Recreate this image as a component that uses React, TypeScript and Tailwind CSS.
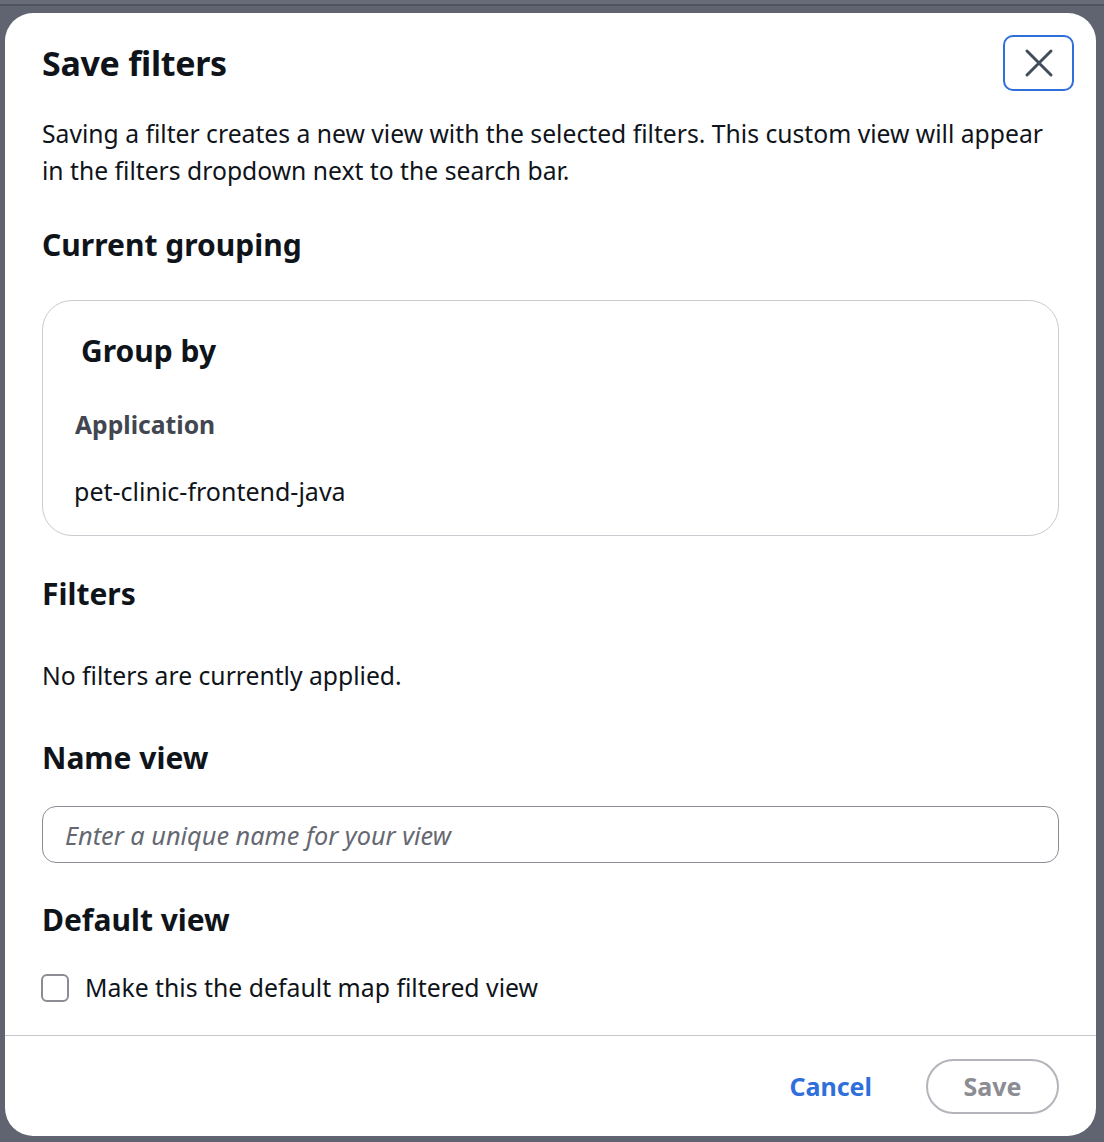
import React, { useState } from 'react';

const font = { fontFamily: '"Noto Sans", "Open Sans", Arial, sans-serif' };

function CloseIcon() {
  return (
    <svg width="30" height="30" viewBox="0 0 30 30" fill="none">
      <path d="M3 3 L27 27 M27 3 L3 27" stroke="#414d5c" strokeWidth="3" strokeLinecap="round" />
    </svg>
  );
}

export default function App() {
  const [name, setName] = useState('');
  const [isDefault, setIsDefault] = useState(false);

  return (
    <div className="w-[1104px] h-[1142px] bg-[#5f6470] overflow-hidden" style={font}>
      <div className="h-[6px] bg-[#676c78] border-b-2 border-[#4f5460]" />
      <div className="pl-[5px] pt-[7px]">
        <div className="w-[1091px] h-[1123px] bg-white rounded-[28px] flex flex-col text-[#0f141a]">
          {/* Header */}
          <div className="flex items-center justify-between pl-[37px] pr-[22px] pt-[22px]">
            <h1 className="text-[34px] leading-[56px] font-bold tracking-[-0.3px]">Save filters</h1>
            <button className="w-[71px] h-[56px] rounded-[10px] border-2 border-[#2f6fdb] flex items-center justify-center">
              <CloseIcon />
            </button>
          </div>

          <div className="px-[37px] flex flex-col">
            <p className="mt-[24px] text-[24.7px] leading-[37px]">
              Saving a filter creates a new view with the selected filters. This custom view will appear in the filters dropdown next to the search bar.
            </p>

            <h2 className="mt-[36px] text-[30px] leading-[40px] font-bold">Current grouping</h2>

            <div className="mt-[35px] border border-[#cacad1] rounded-[30px] pt-[30px] pb-[25px] px-[31px]">
              <div className="pl-[7px] text-[30px] leading-[40px] font-bold">Group by</div>
              <div className="mt-[35px] pl-[1px] text-[24.7px] leading-[37px] font-bold text-[#424650]">Application</div>
              <div className="mt-[30px] text-[25px] leading-[37px]">pet-clinic-frontend-java</div>
            </div>

            <h2 className="mt-[38px] text-[30px] leading-[40px] font-bold">Filters</h2>
            <p className="mt-[43px] text-[24.7px] leading-[37px]">No filters are currently applied.</p>

            <h2 className="mt-[44px] text-[30px] leading-[40px] font-bold">Name view</h2>
            <input
              value={name}
              onChange={(e) => setName(e.target.value)}
              placeholder="Enter a unique name for your view"
              className="mt-[28px] h-[57px] w-full rounded-[14px] border border-[#8c8c94] px-[22px] text-[25.3px] outline-none placeholder:italic placeholder:text-[#656871]"
              style={font}
            />

            <h2 className="mt-[37px] text-[30px] leading-[40px] font-bold">Default view</h2>
            <label className="mt-[29px] flex items-center gap-[16px] h-[37px] cursor-pointer">
              <input
                type="checkbox"
                checked={isDefault}
                onChange={(e) => setIsDefault(e.target.checked)}
                className="appearance-none -ml-[1px] w-[28px] h-[28px] rounded-[6px] border-2 border-[#8c8c94] bg-white"
              />
              <span className="text-[24.8px] leading-[37px]">Make this the default map filtered view</span>
            </label>
          </div>

          {/* Footer */}
          <div className="mt-[29px] border-t border-[#c6c6cd] flex items-center justify-end gap-[54px] pr-[37px] pt-[23px]">
            <button className="text-[25px] font-bold text-[#2f6fdb]">Cancel</button>
            <button className="w-[133px] h-[55px] rounded-full border-2 border-[#b4b4bb] text-[25px] font-bold text-[#8c8c94]">
              Save
            </button>
          </div>
        </div>
      </div>
    </div>
  );
}
